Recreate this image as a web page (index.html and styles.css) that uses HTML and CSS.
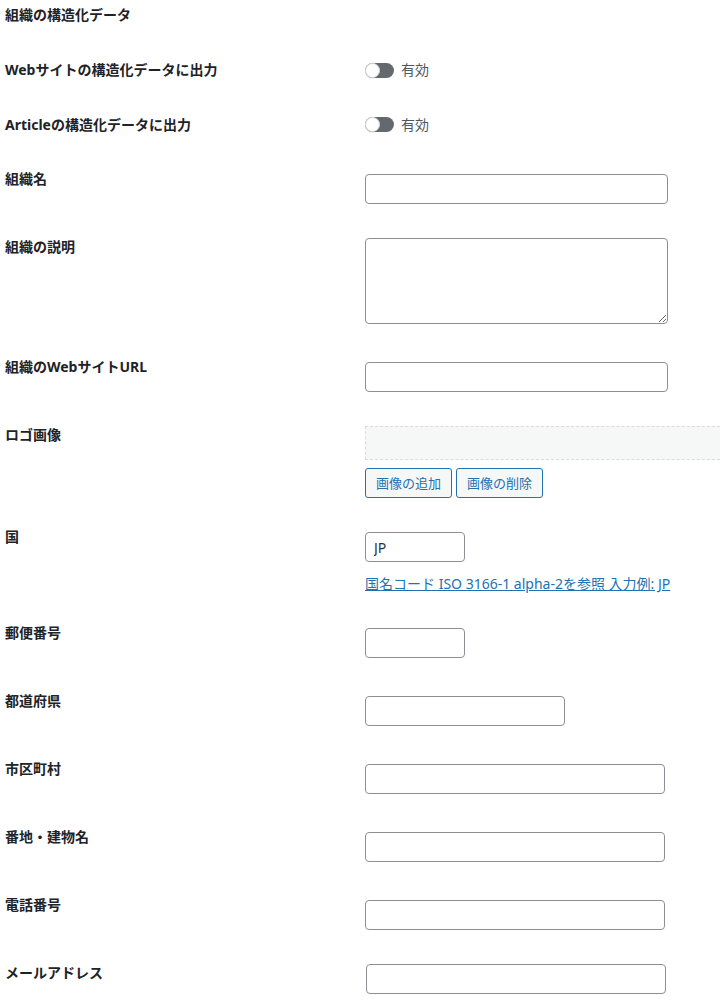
FILE: index.html
```html
<!DOCTYPE html>
<html lang="ja">
<head>
  <meta charset="UTF-8" />
  <meta name="viewport" content="width=device-width, initial-scale=1.0"/>
  <title>組織の構造化データ</title>
  <link rel="stylesheet" href="styles.css">
</head>
<body>

  <h2 class="section-title">組織の構造化データ</h2>

  <div class="form-table">

    <div class="row is-toggle">
      <div class="row-label">Webサイトの構造化データに出力</div>
      <div class="row-field">
        <label class="toggle"><span class="toggle-track"><span class="toggle-knob"></span></span><span class="toggle-text">有効</span></label>
      </div>
    </div>

    <div class="row is-toggle">
      <div class="row-label">Articleの構造化データに出力</div>
      <div class="row-field">
        <label class="toggle"><span class="toggle-track"><span class="toggle-knob"></span></span><span class="toggle-text">有効</span></label>
      </div>
    </div>

    <div class="row">
      <div class="row-label">組織名</div>
      <div class="row-field"><input type="text" class="text-input w-regular" /></div>
    </div>

    <div class="row is-flush">
      <div class="row-label">組織の説明</div>
      <div class="row-field"><textarea class="text-area"></textarea></div>
    </div>

    <div class="row">
      <div class="row-label">組織のWebサイトURL</div>
      <div class="row-field"><input type="text" class="text-input w-regular" /></div>
    </div>

    <div class="row is-flush is-logo">
      <div class="row-label">ロゴ画像</div>
      <div class="row-field">
        <div class="image-preview"></div>
        <div class="button-group">
          <button class="button">画像の追加</button>
          <button class="button">画像の削除</button>
        </div>
      </div>
    </div>

    <div class="row is-country">
      <div class="row-label">国</div>
      <div class="row-field">
        <input type="text" class="text-input w-short" value="JP" />
        <p class="description"><a href="#">国名コード ISO 3166-1 alpha-2を参照 入力例: JP</a></p>
      </div>
    </div>

    <div class="row">
      <div class="row-label">郵便番号</div>
      <div class="row-field"><input type="text" class="text-input w-short" /></div>
    </div>

    <div class="row">
      <div class="row-label">都道府県</div>
      <div class="row-field"><input type="text" class="text-input w-mid" /></div>
    </div>

    <div class="row">
      <div class="row-label">市区町村</div>
      <div class="row-field"><input type="text" class="text-input w-wide" /></div>
    </div>

    <div class="row">
      <div class="row-label">番地・建物名</div>
      <div class="row-field"><input type="text" class="text-input w-wide" /></div>
    </div>

    <div class="row">
      <div class="row-label">電話番号</div>
      <div class="row-field"><input type="text" class="text-input w-wide" /></div>
    </div>

    <div class="row is-flush">
      <div class="row-label">メールアドレス</div>
      <div class="row-field"><input type="email" class="text-input w-wide is-email" /></div>
    </div>

  </div>

</body>
</html>
```

FILE: styles.css
```css
:root {
  --text: #1d2327;
  --muted: #50575e;
  --input-border: #8c8f94;
  --accent: #2271b1;
  --light-bg: #f6f7f7;
}

* {
  box-sizing: border-box;
}

body {
  margin: 0;
  padding: 6px 0 0 5px;
  background: #fff;
  color: var(--text);
  font-family: "Noto Sans", "Noto Sans CJK JP", sans-serif;
  font-size: 14px;
  line-height: 18px;
  overflow: hidden;
}

.section-title {
  margin: 0 0 37px;
  font-size: 14px;
  font-weight: 700;
  line-height: 18px;
}

/* form rows */
.row {
  display: grid;
  grid-template-columns: 360px 1fr;
  align-items: start;
  padding-bottom: 34px;
}

.row-label {
  font-weight: 700;
}

.row-field {
  padding-top: 4px;
}

.row.is-toggle {
  padding-bottom: 36.5px;
}

.row.is-toggle .row-field,
.row.is-flush .row-field {
  padding-top: 0;
}

.row.is-logo {
  padding-bottom: 30px;
}

.row.is-country {
  padding-bottom: 31px;
}

/* toggle */
.toggle {
  display: flex;
  align-items: center;
  height: 18px;
  gap: 7px;
}

.toggle-track {
  display: flex;
  width: 29px;
  height: 15px;
  border-radius: 8px;
  background: #646970;
}

.toggle-knob {
  width: 15px;
  height: 15px;
  border-radius: 50%;
  background: #fff;
  border: 1px solid #dcdcde;
  box-shadow: 0 1px 1px rgba(0, 0, 0, 0.08);
}

.toggle-text {
  color: var(--muted);
  font-size: 14px;
}

/* inputs */
.text-input,
.text-area {
  display: block;
  margin: 0;
  border: 1px solid var(--input-border);
  border-radius: 4px;
  background: #fff;
  color: #2c3338;
  font-family: inherit;
  font-size: 14px;
}

.text-input {
  height: 30px;
  padding: 0 8px;
}

.text-input.is-email {
  margin-left: 1px;
}

.text-area {
  width: 303px;
  height: 86px;
  padding: 2px 6px;
  resize: vertical;
}

.w-regular { width: 303px; }
.w-wide { width: 300px; }
.w-mid { width: 200px; }
.w-short { width: 100px; }

/* logo image */
.image-preview {
  width: 370px;
  height: 34px;
  background: var(--light-bg);
  border: 1px dashed #dcdcde;
}

.button-group {
  display: flex;
  gap: 4px;
  margin-top: 8px;
}

.button {
  height: 30px;
  padding: 0 10px;
  border: 1px solid var(--accent);
  border-radius: 3px;
  background: var(--light-bg);
  color: var(--accent);
  font-family: inherit;
  font-size: 13px;
  line-height: 28px;
  cursor: pointer;
}

.description {
  margin: 13px 0 0;
  font-size: 14px;
  line-height: 18px;
}

.description a {
  color: var(--accent);
  text-decoration: underline;
}
```
